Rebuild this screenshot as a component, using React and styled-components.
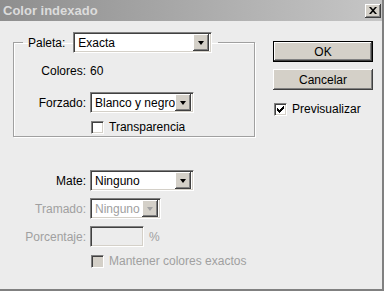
import React from 'react';
import styled, { createGlobalStyle, css } from 'styled-components';

const GlobalStyle = createGlobalStyle`
    body {
        margin: 0;
        font-family: "Liberation Sans", Arial, sans-serif;
        font-size: 12px;
        color: #000;
    }
`;

const sunken = css`
    border: 1px solid;
    border-color: #808080 #ffffff #ffffff #808080;
    box-shadow: inset 1px 1px #404040, inset -1px -1px #d4d0c8;
`;

const raised = css`
    background: #d4d0c8;
    box-shadow: inset -1px -1px #404040, inset 1px 1px #ffffff, inset -2px -2px #808080;
`;

const Window = styled.div`
    width: 384px;
    height: 291px;
    box-sizing: border-box;
    background: #ececec;
    border-right: 2px solid #808080;
    border-bottom: 2px solid #808080;
    display: flex;
    flex-direction: column;
`;

const TitleBar = styled.div`
    height: 21px;
    display: flex;
    align-items: center;
    justify-content: space-between;
    padding: 0 1px 0 3px;
    background: linear-gradient(to right, #8e8e8e, #c6c6c6);
`;

const Title = styled.span`
    color: #dcdcdc;
    font-weight: bold;
    font-size: 13px;
`;

const CloseButton = styled.div`
    width: 16px;
    height: 14px;
    ${raised};
    display: flex;
    align-items: center;
    justify-content: center;
`;

const Body = styled.div`
    display: flex;
    padding: 11px 0 0 13px;
`;

const LeftColumn = styled.div`
    width: 242px;
    display: flex;
    flex-direction: column;
`;

const RightColumn = styled.div`
    margin-left: 18px;
    padding-top: 9px;
    display: flex;
    flex-direction: column;
    gap: 7px;
`;

const GroupBox = styled.fieldset`
    margin: 0;
    padding: 0 0 2px 0;
    border: 1px solid #a0a0a0;
    box-shadow: 1px 1px #ffffff, inset 1px 1px #ffffff;
`;

const Legend = styled.legend`
    margin-left: 9px;
    padding: 0 6px 0 5px;
    display: flex;
    align-items: center;
    gap: 8px;
`;

const FormGrid = styled.div`
    display: grid;
    grid-template-columns: ${p => p.$labelWidth}px auto;
    column-gap: 4px;
    align-items: center;
    margin-top: ${p => p.$top}px;
    row-gap: 7px;
`;

const Label = styled.span`
    text-align: right;
    white-space: nowrap;
    color: ${p => (p.$disabled ? '#a0a0a0' : '#000')};
    margin-top: ${p => p.$top || 0}px;
`;

const Value = styled.span`
    height: 18px;
    line-height: 18px;
`;

const SelectBox = styled.div`
    ${sunken};
    box-sizing: border-box;
    width: ${p => p.$width}px;
    height: 21px;
    margin-top: ${p => p.$top || 0}px;
    background: #ffffff;
    display: flex;
    align-items: center;
    padding: 0 2px 0 4px;
    color: ${p => (p.$disabled ? '#a0a0a0' : '#000')};
`;

const SelectText = styled.span`
    flex: 1;
    white-space: nowrap;
    overflow: hidden;
`;

const ArrowButton = styled.div`
    width: 16px;
    height: 17px;
    ${raised};
    display: flex;
    align-items: center;
    justify-content: center;

    &::after {
        content: '';
        border-left: 3.5px solid transparent;
        border-right: 3.5px solid transparent;
        border-top: 4px solid ${p => (p.$disabled ? '#a0a0a0' : '#000')};
    }
`;

const TextInput = styled.div`
    ${sunken};
    box-sizing: border-box;
    width: 54px;
    height: 21px;
    background: #ececec;
`;

const InputRow = styled.div`
    display: flex;
    align-items: center;
    gap: 5px;
`;

const CheckRow = styled.label`
    grid-column: 2;
    display: flex;
    align-items: center;
    gap: 5px;
    height: 14px;
    margin-left: 1px;
    margin-top: ${p => p.$top || 0}px;
    color: ${p => (p.$disabled ? '#a0a0a0' : '#000')};
`;

const CheckBox = styled.span`
    ${sunken};
    box-sizing: border-box;
    width: 13px;
    height: 13px;
    background: ${p => (p.$disabled ? '#d4d0c8' : '#ffffff')};
    display: flex;
    align-items: center;
    justify-content: center;
`;

const Button = styled.div`
    width: 100px;
    height: 21px;
    box-sizing: border-box;
    ${raised};
    display: flex;
    align-items: center;
    justify-content: center;

    ${p =>
        p.$default && css`
            border: 1px solid #000;
        `}
`;

const Select = ({ value, width, disabled, top }) => (
    <SelectBox $width={width} $disabled={disabled} $top={top}>
        <SelectText>{value}</SelectText>
        <ArrowButton $disabled={disabled} />
    </SelectBox>
);

const Check = ({ checked, disabled, top, children }) => (
    <CheckRow $disabled={disabled} $top={top}>
        <CheckBox $disabled={disabled}>
            {checked && (
                <svg width="7" height="7" viewBox="0 0 7 7">
                    <path d="M0 2h1v1h1v1h1V3h1V2h1V1h1V0h1v3H6v1H5v1H4v1H3v1H2V6H1V5H0z" fill="#000" />
                </svg>
            )}
        </CheckBox>
        {children}
    </CheckRow>
);

export default function App() {
    return (
        <>
            <GlobalStyle />
            <Window>
                <TitleBar>
                    <Title>Color indexado</Title>
                    <CloseButton>
                        <svg width="8" height="7" viewBox="0 0 8 7">
                            <path d="M0 0h2l2 2.3L6 0h2L5 3.5 8 7H6L4 4.7 2 7H0l3-3.5z" fill="#000" />
                        </svg>
                    </CloseButton>
                </TitleBar>
                <Body>
                    <LeftColumn>
                        <GroupBox>
                            <Legend>
                                <span>Paleta:</span>
                                <Select value="Exacta" width={139} />
                            </Legend>
                            <FormGrid $labelWidth={72} $top={9}>
                                <Label>Colores:</Label>
                                <Value>60</Value>
                                <Label $top={5}>Forzado:</Label>
                                <Select value="Blanco y negro" width={104} top={5} />
                                <Check>Transparencia</Check>
                            </FormGrid>
                        </GroupBox>
                        <FormGrid $labelWidth={73} $top={33}>
                            <Label>Mate:</Label>
                            <Select value="Ninguno" width={104} />
                            <Label $disabled>Tramado:</Label>
                            <Select value="Ninguno" width={71} disabled />
                            <Label $disabled>Porcentaje:</Label>
                            <InputRow>
                                <TextInput />
                                <Label $disabled>%</Label>
                            </InputRow>
                            <Check disabled>Mantener colores exactos</Check>
                        </FormGrid>
                    </LeftColumn>
                    <RightColumn>
                        <Button $default>OK</Button>
                        <Button>Cancelar</Button>
                        <Check checked top={5}>Previsualizar</Check>
                    </RightColumn>
                </Body>
            </Window>
        </>
    );
}
